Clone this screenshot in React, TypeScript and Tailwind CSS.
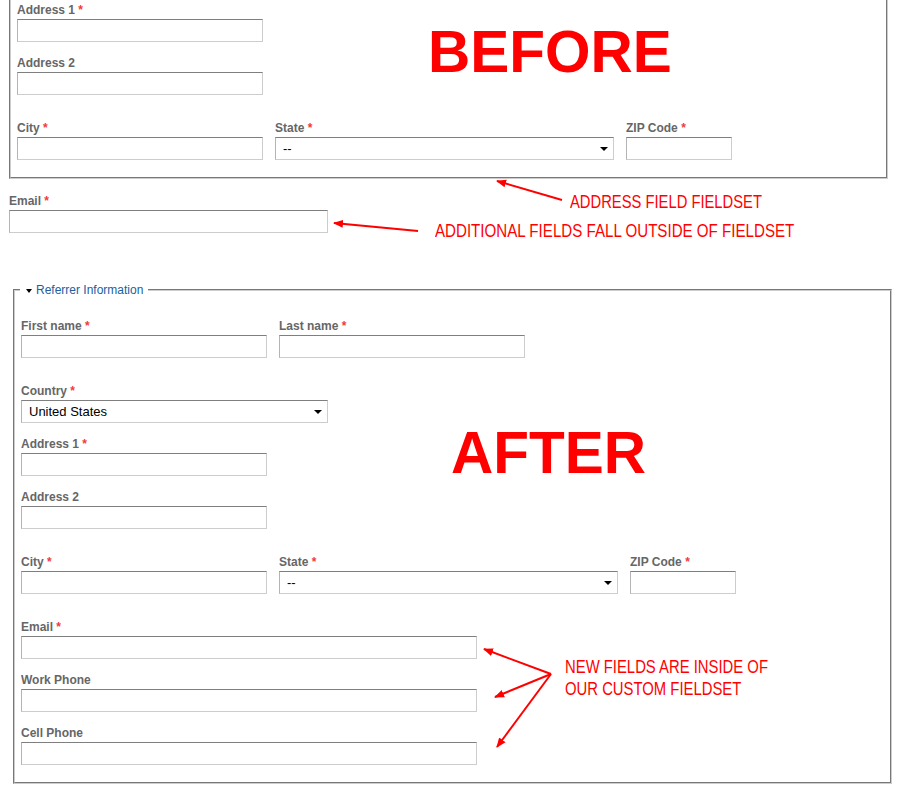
import React from "react";

type FieldProps = { label: string; required?: boolean; children: React.ReactNode };

function Field({ label, required, children }: FieldProps) {
  return (
    <div>
      <label className="mb-[1px] block text-[12px] font-bold leading-[16px] text-[#666]">
        {label}
        {required && <span className="text-[#f23a3a]"> *</span>}
      </label>
      {children}
    </div>
  );
}

function TextInput({ className }: { className: string }) {
  return (
    <input
      type="text"
      className={`block h-[23px] border border-[#cdcdcd] border-t-[#7f7f7f] border-l-[#b4b4b4] bg-white outline-none ${className}`}
    />
  );
}

function Select({ value, className }: { value: string; className: string }) {
  return (
    <div
      className={`flex h-[23px] items-center justify-between border border-[#cdcdcd] border-t-[#7f7f7f] border-l-[#b4b4b4] bg-white pl-[7px] pr-[5px] text-[13px] leading-none text-black ${className}`}
    >
      <span>{value}</span>
      <span className="h-0 w-0 border-x-[4px] border-t-[4px] border-x-transparent border-t-black" />
    </div>
  );
}

function Arrows() {
  return (
    <svg className="pointer-events-none absolute left-0 top-0" width="912" height="800" viewBox="0 0 912 800">
      <defs>
        <marker id="head" viewBox="0 0 10 10" refX="9" refY="5" markerWidth="5" markerHeight="5" orient="auto">
          <path d="M0,1 L10,5 L0,9 z" fill="#f00" />
        </marker>
      </defs>
      <g stroke="#f00" strokeWidth="2" fill="none" markerEnd="url(#head)">
        <line x1="562" y1="200" x2="497" y2="181" />
        <line x1="418" y1="231" x2="334" y2="223" />
        <line x1="551" y1="674" x2="484" y2="649" />
        <line x1="551" y1="674" x2="495" y2="697" />
        <line x1="551" y1="674" x2="497" y2="747" />
      </g>
    </svg>
  );
}

export default function App() {
  return (
    <div className="relative h-[800px] w-[912px] overflow-hidden bg-white font-['Liberation_Sans',Arial,sans-serif]">
      {/* before */}
      <fieldset className="-mt-[20px] ml-[9px] w-[879px] border-2 border-[#cccccc] pb-[17px] pl-[6px] pt-[20px] [border-style:groove]">
        <div className="flex flex-col gap-[13px]">
          <Field label="Address 1" required>
            <TextInput className="w-[246px]" />
          </Field>
          <Field label="Address 2">
            <TextInput className="w-[246px]" />
          </Field>
        </div>
        <div className="mt-[25px] flex gap-3">
          <Field label="City" required>
            <TextInput className="w-[246px]" />
          </Field>
          <Field label="State" required>
            <Select value="--" className="w-[339px]" />
          </Field>
          <Field label="ZIP Code" required>
            <TextInput className="w-[106px]" />
          </Field>
        </div>
      </fieldset>

      <div className="ml-[9px] mt-[14px]">
        <Field label="Email" required>
          <TextInput className="w-[319px]" />
        </Field>
      </div>

      {/* after */}
      <fieldset className="ml-[13px] mt-[49px] w-[879px] border-2 border-[#cccccc] pb-[17px] pl-[6px] pt-[20px] [border-style:groove]">
        <legend className="-ml-px pl-[6px] pr-[5px] text-[12px] leading-[16px] text-[#215e9e]">
          <span className="mr-[4px] inline-block h-0 w-0 border-x-[3px] border-t-[4px] border-x-transparent border-t-black align-middle" />
          Referrer Information
        </legend>
        <div className="flex gap-3">
          <Field label="First name" required>
            <TextInput className="w-[246px]" />
          </Field>
          <Field label="Last name" required>
            <TextInput className="w-[246px]" />
          </Field>
        </div>
        <div className="mt-[25px] flex flex-col gap-[13px]">
          <Field label="Country" required>
            <Select value="United States" className="w-[307px]" />
          </Field>
          <Field label="Address 1" required>
            <TextInput className="w-[246px]" />
          </Field>
          <Field label="Address 2">
            <TextInput className="w-[246px]" />
          </Field>
        </div>
        <div className="mt-[25px] flex gap-3">
          <Field label="City" required>
            <TextInput className="w-[246px]" />
          </Field>
          <Field label="State" required>
            <Select value="--" className="w-[339px]" />
          </Field>
          <Field label="ZIP Code" required>
            <TextInput className="w-[106px]" />
          </Field>
        </div>
        <div className="mt-[25px] flex flex-col gap-[13px]">
          <Field label="Email" required>
            <TextInput className="w-[456px]" />
          </Field>
          <Field label="Work Phone">
            <TextInput className="w-[456px]" />
          </Field>
          <Field label="Cell Phone">
            <TextInput className="w-[456px]" />
          </Field>
        </div>
      </fieldset>

      {/* annotations */}
      <div className="absolute left-[428px] top-[23px] text-[58.5px] font-bold leading-[58px] text-[#f00]">BEFORE</div>
      <div className="absolute left-[451px] top-[424px] text-[58.5px] font-bold leading-[58px] text-[#f00]">AFTER</div>

      <div className="absolute left-[570px] top-[193px] origin-left scale-x-[0.82] whitespace-nowrap text-[18px] leading-none text-[#f00]">
        ADDRESS FIELD FIELDSET
      </div>
      <div className="absolute left-[435px] top-[222px] origin-left scale-x-[0.84] whitespace-nowrap text-[18px] leading-none text-[#f00]">
        ADDITIONAL FIELDS FALL OUTSIDE OF FIELDSET
      </div>
      <div className="absolute left-[565px] top-[656px] origin-left scale-x-[0.825] whitespace-nowrap text-[18px] leading-[22px] text-[#f00]">
        NEW FIELDS ARE INSIDE OF
        <br />
        OUR CUSTOM FIELDSET
      </div>

      <Arrows />
    </div>
  );
}
